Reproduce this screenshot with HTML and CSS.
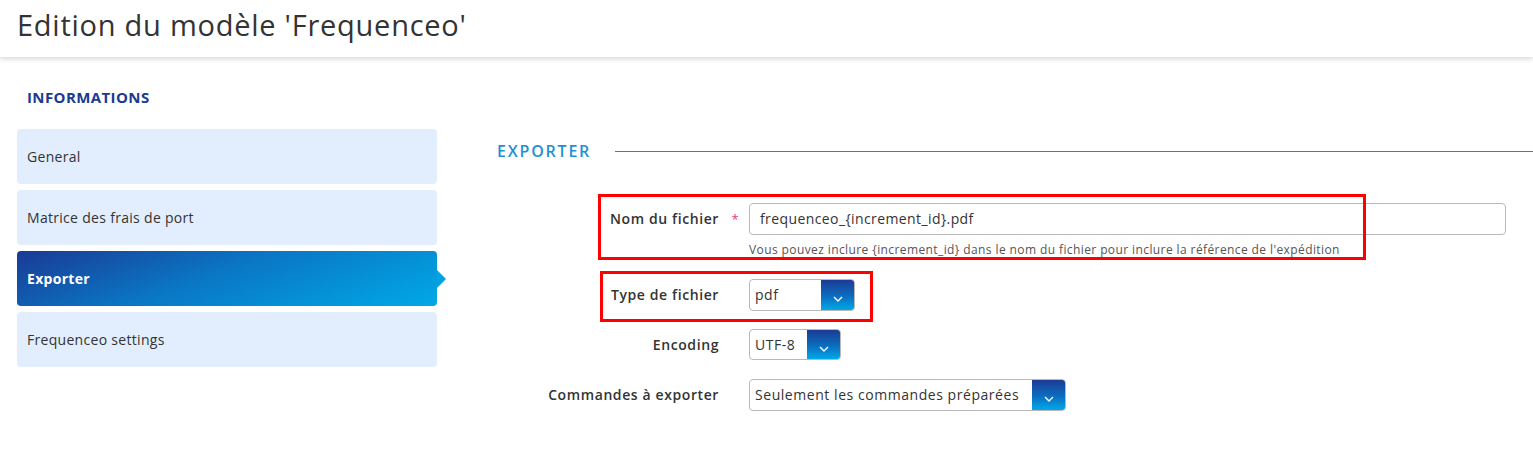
FILE: index.html
```html
<!DOCTYPE html>
<html lang="fr">
<head>
<meta charset="utf-8">
<title>Edition du modèle 'Frequenceo'</title>
<link rel="stylesheet" href="styles.css">
</head>
<body>
<header class="page-header">
  <h1 class="page-title">Edition du modèle 'Frequenceo'</h1>
</header>
<main class="layout">
  <aside class="sidebar">
    <div class="sidebar-title">INFORMATIONS</div>
    <nav class="tabs">
      <div class="tab">General</div>
      <div class="tab">Matrice des frais de port</div>
      <div class="tab tab-active">Exporter</div>
      <div class="tab">Frequenceo settings</div>
    </nav>
  </aside>
  <section class="content">
    <div class="section-head">
      <span class="section-title">EXPORTER</span>
      <span class="section-line"></span>
    </div>
    <div class="form">
      <div class="row row-first">
        <label class="label">Nom du fichier</label>
        <span class="req">*</span>
        <div class="field">
          <div class="input">frequenceo_{increment_id}.pdf</div>
          <div class="help">Vous pouvez inclure {increment_id} dans le nom du fichier pour inclure la référence de l'expédition</div>
        </div>
      </div>
      <div class="row">
        <label class="label">Type de fichier</label>
        <span class="req"></span>
        <div class="field">
          <div class="select sel-type"><span class="sel-text">pdf</span><span class="sel-btn"><svg width="10" height="6" viewBox="0 0 10 6"><path d="M1 1l4 4 4-4" fill="none" stroke="#fff" stroke-width="1.4"/></svg></span></div>
        </div>
      </div>
      <div class="row">
        <label class="label">Encoding</label>
        <span class="req"></span>
        <div class="field">
          <div class="select sel-enc"><span class="sel-text">UTF-8</span><span class="sel-btn"><svg width="10" height="6" viewBox="0 0 10 6"><path d="M1 1l4 4 4-4" fill="none" stroke="#fff" stroke-width="1.4"/></svg></span></div>
        </div>
      </div>
      <div class="row">
        <label class="label">Commandes à exporter</label>
        <span class="req"></span>
        <div class="field">
          <div class="select sel-cmd"><span class="sel-text">Seulement les commandes préparées</span><span class="sel-btn"><svg width="10" height="6" viewBox="0 0 10 6"><path d="M1 1l4 4 4-4" fill="none" stroke="#fff" stroke-width="1.4"/></svg></span></div>
        </div>
      </div>
      <div class="mark mark-1"></div>
      <div class="mark mark-2"></div>
    </div>
  </section>
</main>
</body>
</html>
```
FILE: styles.css
```css
* { box-sizing: border-box; }
html, body { margin: 0; padding: 0; background: #fff; }
body {
  font-family: "Open Sans", "Liberation Sans", sans-serif;
  color: #333;
  width: 1533px;
  height: 471px;
  overflow: hidden;
}
.page-header {
  height: 57px;
  background: #fff;
  box-shadow: 0 2px 5px rgba(0,0,0,0.16);
  padding-left: 17px;
  position: relative;
  z-index: 1;
}
.page-title {
  margin: 0;
  font-weight: 400;
  font-size: 29px;
  line-height: 50px;
  color: #333;
  letter-spacing: 0.75px;
}
.layout {
  display: flex;
  padding-left: 17px;
}
.sidebar {
  width: 420px;
  flex: none;
}
.sidebar-title {
  margin-top: 30px;
  padding-left: 10px;
  font-size: 15px;
  line-height: 20px;
  font-weight: 700;
  color: #1b3a92;
  letter-spacing: 0.4px;
}
.tabs {
  margin-top: 22px;
  display: flex;
  flex-direction: column;
  gap: 6px;
}
.tab {
  height: 55px;
  display: flex;
  align-items: center;
  padding-left: 10px;
  background: #e2eefd;
  border-radius: 4px;
  font-size: 14px;
  color: #333;
  position: relative;
  letter-spacing: 0.3px;
}
.tab-active {
  background: linear-gradient(160deg, #1a3a94 0%, #0a76c4 45%, #00a9e6 100%);
  color: #fff;
  font-weight: 700;
}
.tab-active::after {
  content: "";
  position: absolute;
  right: -9px;
  top: 50%;
  margin-top: -9px;
  border-top: 9px solid transparent;
  border-bottom: 9px solid transparent;
  border-left: 9px solid #01a3e0;
}
.content {
  flex: 1;
  margin-left: 60px;
}
.section-head {
  margin-top: 84px;
  display: flex;
  align-items: center;
  height: 20px;
}
.section-title {
  font-size: 16px;
  font-weight: 600;
  color: #1e90d8;
  letter-spacing: 1.8px;
}
.section-line {
  flex: 1;
  height: 1px;
  background: #1e88c8;
  margin-left: 24px;
}
.form {
  position: relative;
  margin-top: 42px;
  display: flex;
  flex-direction: column;
  gap: 18px;
}
.row {
  display: flex;
  align-items: flex-start;
}
.label {
  width: 222px;
  text-align: right;
  font-size: 14px;
  font-weight: 600;
  line-height: 32px;
  color: #333;
  letter-spacing: 0.6px;
}
.req {
  width: 30px;
  text-align: center;
  color: #e0427a;
  font-size: 13px;
  line-height: 32px;
  padding-left: 2px;
}
.field {
  display: flex;
  flex-direction: column;
}
.input {
  width: 757px;
  height: 32px;
  border: 1px solid #b9b9b9;
  border-radius: 4px;
  padding-left: 10px;
  font-size: 14px;
  line-height: 30px;
  color: #333;
  letter-spacing: 0.4px;
}
.help {
  font-size: 12px;
  line-height: 16px;
  margin-top: 7px;
  margin-bottom: 3px;
  color: #555;
  letter-spacing: 0.4px;
}
.select {
  height: 32px;
  border: 1px solid #b9b9b9;
  border-radius: 4px;
  display: flex;
  overflow: hidden;
}
.sel-type { width: 106px; }
.sel-enc { width: 92px; height: 31px; }
.sel-cmd { width: 317px; }
.sel-text {
  flex: 1;
  padding-left: 5px;
  font-size: 14px;
  line-height: 30px;
  color: #333;
  white-space: nowrap;
  letter-spacing: 0.55px;
}
.sel-btn {
  width: 33px;
  flex: none;
  background: linear-gradient(180deg, #1b3b94 0%, #0b6ec0 55%, #00a9e8 100%);
  display: flex;
  align-items: center;
  justify-content: center;
  padding-top: 8px;
}
.mark {
  position: absolute;
  border: 3px solid #ff0000;
}
.mark-1 {
  left: 101px;
  top: -9px;
  width: 768px;
  height: 66px;
}
.mark-2 {
  left: 103px;
  top: 68px;
  width: 273px;
  height: 51px;
}
```
